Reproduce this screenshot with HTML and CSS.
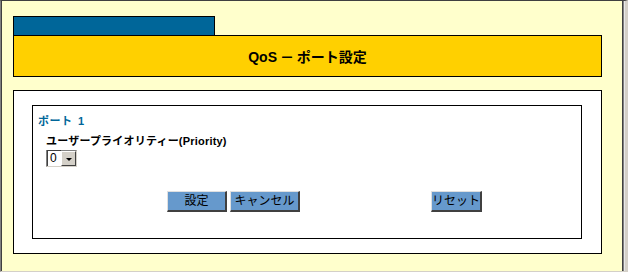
FILE: index.html
```html
<!DOCTYPE html>
<html lang="ja">
<head>
    <meta charset="UTF-8">
    <title>QoS - ポート設定</title>
    <link rel="stylesheet" href="styles.css">
</head>
<body>
    <div class="frame">
        <div class="page">
            <!-- Cabecera -->
            <div class="tab"></div>
            <div class="header">
                <h1>QoS － ポート設定</h1>
            </div>

            <!-- Formulario -->
            <div class="outer">
                <div class="inner">
                    <div class="port">ポート 1</div>
                    <div class="field">
                        <div class="label">ユーザープライオリティー(Priority)</div>
                        <div class="select">
                            <span class="select-value">0</span>
                            <span class="select-arrow"></span>
                        </div>
                    </div>
                    <div class="buttons">
                        <button class="button btn-set">設定</button>
                        <button class="button btn-cancel">キャンセル</button>
                        <button class="button btn-reset">リセット</button>
                    </div>
                </div>
            </div>
        </div>
    </div>
</body>
</html>
```

FILE: styles.css
```css
html, body {
    margin: 0;
    padding: 0;
    background-color: #d4d0c8;
}

body {
    font-family: "Liberation Sans", "Noto Sans CJK JP", sans-serif;
    color: #000;
}

.frame {
    width: 628px;
    height: 272px;
    box-sizing: border-box;
    background-color: #ffffcc;
    border-top: 1px solid #404040;
    border-left: 1px solid #808080;
    border-right: 3px solid #d4d0c8;
    border-bottom: 1px solid #d4d0c8;
    box-shadow: inset 1px 0 0 #404040, inset -1px 0 0 #e8e8e8, inset -2px 0 0 #808080, inset -3px 0 0 #404040;
}

.page {
    padding: 15px 0 0 12px;
}

.tab {
    width: 202px;
    height: 19px;
    box-sizing: border-box;
    background-color: #006699;
    border: 1px solid #000;
    border-bottom: none;
}

.header {
    width: 589px;
    height: 42px;
    box-sizing: border-box;
    background-color: #ffd000;
    border: 1px solid #000;
    display: flex;
    align-items: center;
    justify-content: center;
}

.header h1 {
    margin: 0;
    font-size: 14px;
    font-weight: bold;
    line-height: 16px;
    padding-top: 1px;
    word-spacing: -1px;
}

.outer {
    width: 589px;
    height: 164px;
    box-sizing: border-box;
    margin-top: 13px;
    background-color: #fff;
    border: 1px solid #000;
    padding: 14px 0 0 18px;
}

.inner {
    width: 550px;
    height: 134px;
    box-sizing: border-box;
    border: 1px solid #000;
    padding: 9px 0 0 5px;
}

.port {
    color: #006699;
    font-size: 11px;
    font-weight: bold;
    line-height: 12px;
    letter-spacing: 0.5px;
    word-spacing: 2px;
}

.field {
    margin: 7px 0 0 8px;
}

.label {
    font-size: 11px;
    font-weight: bold;
    line-height: 14px;
    letter-spacing: 0.2px;
}

.select {
    display: flex;
    width: 31px;
    height: 17px;
    box-sizing: border-box;
    margin-top: 2px;
    border-top: 1px solid #808080;
    border-left: 1px solid #808080;
    border-right: 1px solid #d4d0c8;
    border-bottom: 1px solid #d4d0c8;
    background-color: #fff;
}

.select-value {
    flex: 1;
    font-size: 12px;
    line-height: 15px;
    padding-left: 2px;
    border-top: 1px solid #404040;
    border-left: 1px solid #404040;
    margin: -1px 0 0 0;
}

.select-arrow {
    width: 15px;
    box-sizing: border-box;
    background-color: #d4d0c8;
    border-top: 1px solid #fff;
    border-left: 1px solid #fff;
    border-right: 1px solid #404040;
    border-bottom: 1px solid #404040;
    display: flex;
    align-items: center;
    justify-content: center;
}

.select-arrow::after {
    content: "";
    border-left: 3px solid transparent;
    border-right: 3px solid transparent;
    border-top: 3px solid #000;
    margin-top: 1px;
}

.buttons {
    display: flex;
    margin: 24px 0 0 129px;
}

.button {
    height: 21px;
    box-sizing: border-box;
    padding: 0;
    margin: 0;
    font-family: "Liberation Sans", "Noto Sans CJK JP", sans-serif;
    font-size: 12px;
    line-height: 16px;
    color: #000;
    background-color: #6699cc;
    border-top: 1px solid #e0e0e0;
    border-left: 1px solid #e0e0e0;
    border-right: 2px solid #404040;
    border-bottom: 2px solid #404040;
    cursor: pointer;
}

.btn-set {
    width: 60px;
}

.btn-cancel {
    width: 70px;
    margin-left: 3px;
}

.btn-reset {
    width: 51px;
    margin-left: 131px;
}
```
